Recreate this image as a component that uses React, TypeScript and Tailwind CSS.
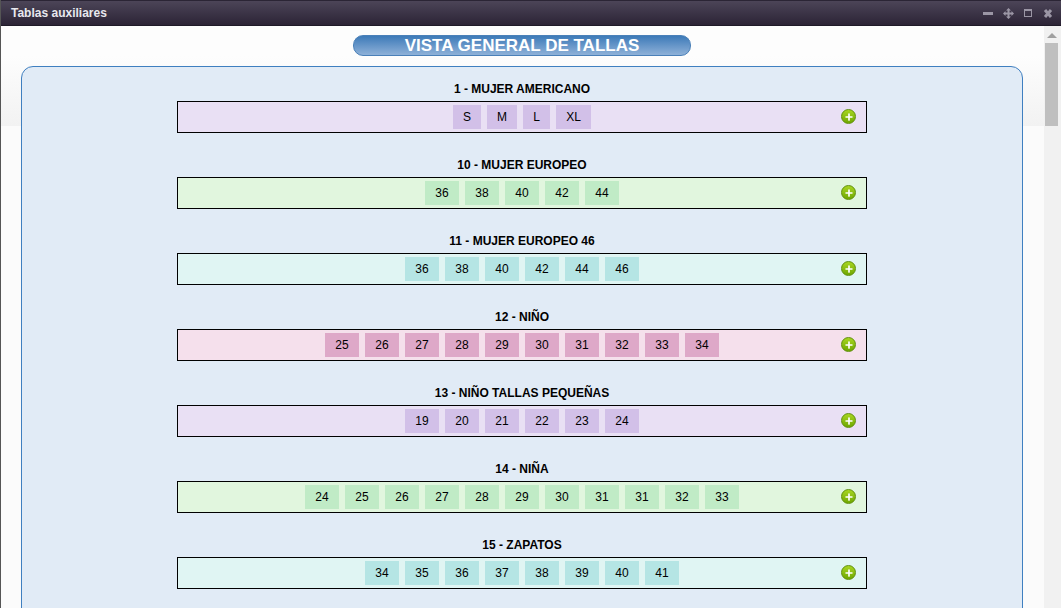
import { Plus } from 'lucide-react'

type Tone = 'purple' | 'green' | 'cyan' | 'pink'

const TONES: Record<Tone, { row: string; chip: string }> = {
  purple: { row: 'bg-[#e9e0f4]', chip: 'bg-[#d2c0e8]' },
  green: { row: 'bg-[#e1f6de]', chip: 'bg-[#c0ebc6]' },
  cyan: { row: 'bg-[#e0f5f3]', chip: 'bg-[#b5e5e4]' },
  pink: { row: 'bg-[#f5e0ec]', chip: 'bg-[#dea8c8]' },
}

const CHIP_WIDTHS: Record<string, string> = {
  S: 'w-[28px]',
  M: 'w-[30px]',
  L: 'w-[27px]',
  XL: 'w-[35px]',
}

const GROUPS: { title: string; tone: Tone; sizes: string[] }[] = [
  { title: '1 - MUJER AMERICANO', tone: 'purple', sizes: ['S', 'M', 'L', 'XL'] },
  { title: '10 - MUJER EUROPEO', tone: 'green', sizes: ['36', '38', '40', '42', '44'] },
  { title: '11 - MUJER EUROPEO 46', tone: 'cyan', sizes: ['36', '38', '40', '42', '44', '46'] },
  { title: '12 - NIÑO', tone: 'pink', sizes: ['25', '26', '27', '28', '29', '30', '31', '32', '33', '34'] },
  { title: '13 - NIÑO TALLAS PEQUEÑAS', tone: 'purple', sizes: ['19', '20', '21', '22', '23', '24'] },
  { title: '14 - NIÑA', tone: 'green', sizes: ['24', '25', '26', '27', '28', '29', '30', '31', '31', '32', '33'] },
  { title: '15 - ZAPATOS', tone: 'cyan', sizes: ['34', '35', '36', '37', '38', '39', '40', '41'] },
]

function AddIcon() {
  return (
    <span className="absolute right-[10px] top-[7px] grid h-[15px] w-[15px] place-items-center rounded-full border border-[#5f8f0a] bg-gradient-to-b from-[#a8d620] to-[#6fa800]">
      <Plus size={10} strokeWidth={4} className="text-white" />
    </span>
  )
}

function WindowButtons() {
  return (
    <div className="flex items-center gap-[10px] text-[#9b96a5]">
      <svg width="10" height="11" viewBox="0 0 10 11" fill="currentColor"><rect x="0" y="4" width="10" height="3" /></svg>
      <svg width="11" height="11" viewBox="0 0 11 11" fill="currentColor"><path d="M5.5 0 8 2.5H6.5V4.5H8.5V3L11 5.5 8.5 8V6.5H6.5V8.5H8L5.5 11 3 8.5H4.5V6.5H2.5V8L0 5.5 2.5 3V4.5H4.5V2.5H3Z" /></svg>
      <svg width="9" height="11" viewBox="0 0 9 11" fill="none" stroke="currentColor"><rect x="0.5" y="1.5" width="7" height="7" strokeWidth="1" /><rect x="0.5" y="1.5" width="7" height="1.5" fill="currentColor" strokeWidth="0" /></svg>
      <svg width="10" height="11" viewBox="0 0 10 11" fill="none" stroke="currentColor" strokeWidth="3"><path d="M2 2 8 9M8 2 2 9" /></svg>
    </div>
  )
}

export default function App() {
  return (
    <div className="flex h-screen flex-col overflow-hidden border-l border-[#555] bg-[#fbfbfb] font-['Liberation_Sans',Arial,sans-serif] text-[12px] text-black">
      <header className="flex h-[26px] shrink-0 items-center justify-between border-y border-t-[#2b2535] border-b-[#1f1a28] bg-gradient-to-b from-[#4c4558] to-[#2c2436] pl-[10px] pr-[8px]">
        <span className="text-[12px] font-bold text-[#e8e8ee]">Tablas auxiliares</span>
        <WindowButtons />
      </header>
      <div className="relative flex min-h-0 flex-1">
        <div className="absolute inset-x-0 top-0 h-[100px] bg-gradient-to-b from-[#fdfdfd] from-30% to-[#f2f2f2]" />
        <main className="relative min-w-0 flex-1 pl-[20px] pr-[21px] pt-[9px]">
          <h1 className="mx-auto flex h-[21px] w-[338px] items-center justify-center rounded-[10px] border border-[#4a80b8] bg-gradient-to-b from-[#3c7ab8] to-[#8eb1d8] text-[17px] font-bold leading-none text-white">
            VISTA GENERAL DE TALLAS
          </h1>
          <section className="mt-[10px] rounded-t-[12px] border border-[#3f7fc0] bg-[#e1ebf6] pb-[40px] pt-[15px]">
            <div className="flex flex-col gap-[25px]">
              {GROUPS.map((group) => (
                <div key={group.title} className="flex flex-col items-center">
                  <div className="mb-[5px] h-[14px] text-[12px] font-bold leading-[14px]">{group.title}</div>
                  <div className={`relative flex h-[32px] w-[690px] items-center justify-center gap-[6px] border border-black ${TONES[group.tone].row}`}>
                    {group.sizes.map((size, i) => (
                      <span key={i} className={`flex h-[24px] items-center justify-center ${CHIP_WIDTHS[size] ?? 'w-[34px]'} ${TONES[group.tone].chip}`}>{size}</span>
                    ))}
                    <AddIcon />
                  </div>
                </div>
              ))}
            </div>
          </section>
        </main>
        <aside className="relative w-[17px] shrink-0 bg-[#f1f1f1]">
          <div className="ml-[3px] mt-[7px] h-0 w-0 border-x-[5px] border-b-[5px] border-x-transparent border-b-[#a0a0a0]" />
          <div className="ml-[1px] mt-[5px] h-[83px] w-[13px] bg-[#bfbfbf]" />
        </aside>
      </div>
    </div>
  )
}
